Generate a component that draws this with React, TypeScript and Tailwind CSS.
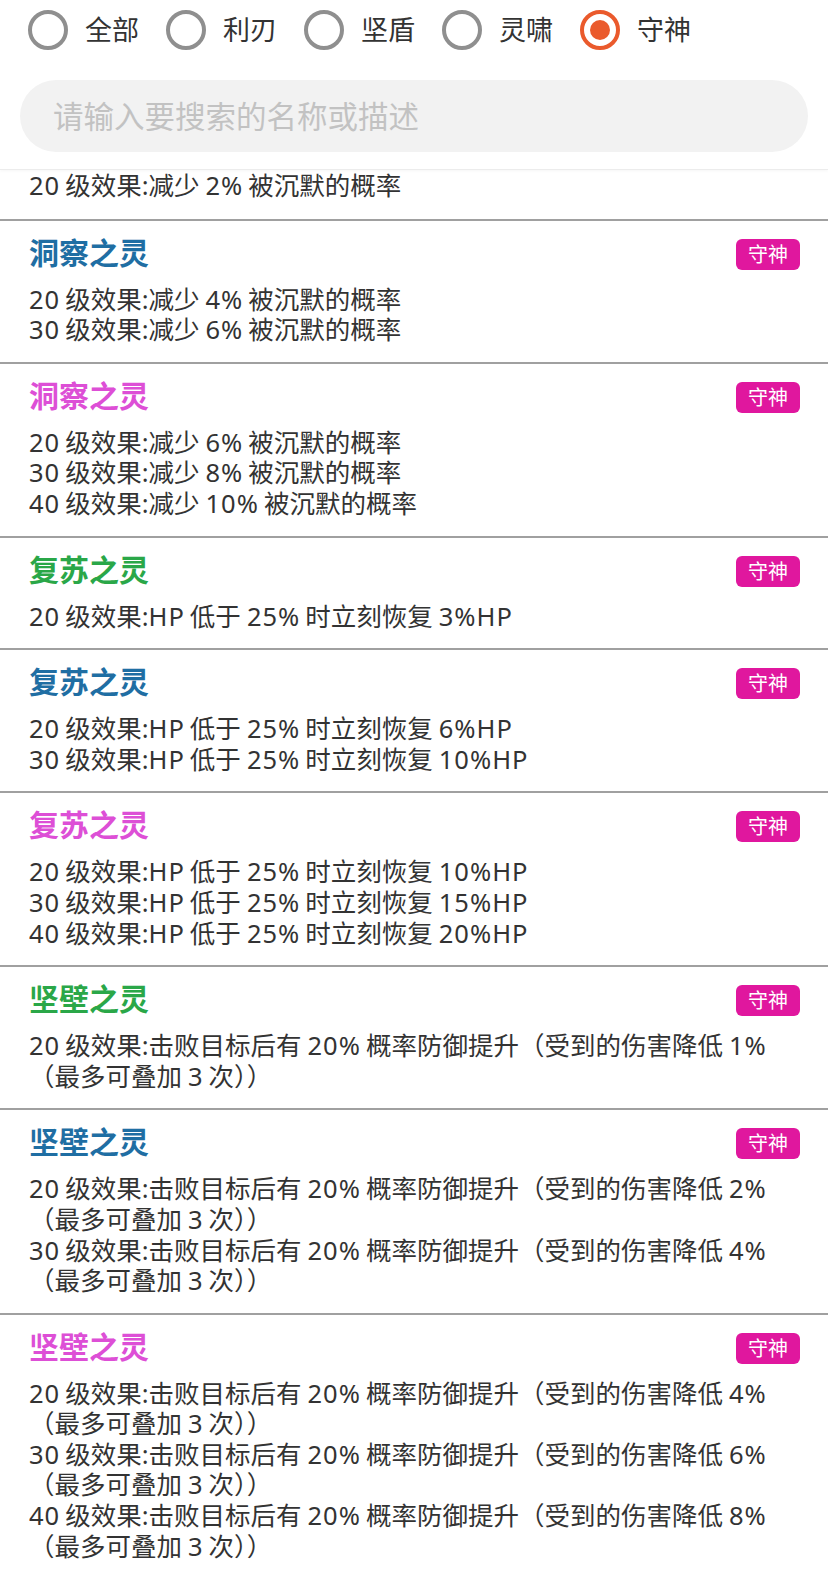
import React, { useState } from 'react';

type Rank = 'blue' | 'pink' | 'green';

interface Spirit {
  id: number;
  name: string;
  rank: Rank;
  effects: string[];
}

const rankColor: Record<Rank, string> = {
  blue: 'text-[#1f6ea3]',
  pink: 'text-[#dd4fd6]',
  green: 'text-[#2aa748]',
};

const tabs = ['全部', '利刃', '坚盾', '灵啸', '守神'];

const spirits: Spirit[] = [
  { id: 1, name: '洞察之灵', rank: 'blue', effects: ['20级效果:减少4%被沉默的概率', '30级效果:减少6%被沉默的概率'] },
  { id: 2, name: '洞察之灵', rank: 'pink', effects: ['20级效果:减少6%被沉默的概率', '30级效果:减少8%被沉默的概率', '40级效果:减少10%被沉默的概率'] },
  { id: 3, name: '复苏之灵', rank: 'green', effects: ['20级效果:HP低于25%时立刻恢复3%HP'] },
  { id: 4, name: '复苏之灵', rank: 'blue', effects: ['20级效果:HP低于25%时立刻恢复6%HP', '30级效果:HP低于25%时立刻恢复10%HP'] },
  { id: 5, name: '复苏之灵', rank: 'pink', effects: ['20级效果:HP低于25%时立刻恢复10%HP', '30级效果:HP低于25%时立刻恢复15%HP', '40级效果:HP低于25%时立刻恢复20%HP'] },
  { id: 6, name: '坚壁之灵', rank: 'green', effects: ['20级效果:击败目标后有20%概率防御提升（受到的伤害降低1%（最多可叠加3次））'] },
  {
    id: 7,
    name: '坚壁之灵',
    rank: 'blue',
    effects: [
      '20级效果:击败目标后有20%概率防御提升（受到的伤害降低2%（最多可叠加3次））',
      '30级效果:击败目标后有20%概率防御提升（受到的伤害降低4%（最多可叠加3次））',
    ],
  },
  {
    id: 8,
    name: '坚壁之灵',
    rank: 'pink',
    effects: [
      '20级效果:击败目标后有20%概率防御提升（受到的伤害降低4%（最多可叠加3次））',
      '30级效果:击败目标后有20%概率防御提升（受到的伤害降低6%（最多可叠加3次））',
      '40级效果:击败目标后有20%概率防御提升（受到的伤害降低8%（最多可叠加3次））',
    ],
  },
];

const isHan = (c?: string) => !!c && /[\u4e00-\u9fff]/.test(c);

// mimic the CJK/latin autospacing of the original device
function Spaced({ text }: { text: string }) {
  const parts = text.split(/([A-Za-z0-9%]+)/);
  return (
    <>
      {parts.map((p, i) => {
        if (i % 2 === 0) return p;
        const before = isHan(parts[i - 1]?.slice(-1));
        const after = isHan(parts[i + 1]?.charAt(0));
        const cls = ['tracking-[1px]', before ? 'ml-[6px]' : '', after ? 'mr-[5px]' : ''].join(' ');
        return (
          <span key={i} className={cls}>
            {p}
          </span>
        );
      })}
    </>
  );
}

function Radio({ checked }: { checked: boolean }) {
  return checked ? (
    <span className="flex h-10 w-10 shrink-0 items-center justify-center rounded-full border-4 border-[#ea5a2c]">
      <span className="h-5 w-5 rounded-full bg-[#ea5a2c]" />
    </span>
  ) : (
    <span className="h-10 w-10 shrink-0 rounded-full border-4 border-[#8f8f8f]" />
  );
}

export default function App() {
  const [tab, setTab] = useState(4);
  const [keyword, setKeyword] = useState('');

  return (
    <div
      className="min-h-screen bg-white text-[#333]"
      style={{ fontFamily: '"Noto Sans", "Noto Sans CJK SC", sans-serif' }}
    >
      {/* Filter header */}
      <div className="relative z-10 border-b border-[#ececec] bg-white pb-[17px] shadow-[0_1px_3px_rgba(0,0,0,0.04)]">
        <div className="flex items-center gap-x-[27px] pl-7 pt-[10px]">
          {tabs.map((t, i) => (
            <button key={t} onClick={() => setTab(i)} className="flex items-center gap-[17px]">
              <Radio checked={tab === i} />
              <span className="text-[27px] leading-10 text-[#333]">{t}</span>
            </button>
          ))}
        </div>
        <div className="mx-5 mt-[30px]">
          <input
            value={keyword}
            onChange={e => setKeyword(e.target.value)}
            placeholder="请输入要搜索的名称或描述"
            className="h-[72px] w-full rounded-full bg-[#f2f2f2] px-[33px] text-[30.5px] text-[#333] outline-none placeholder:text-[#c2c2c2]"
          />
        </div>
      </div>

      {/* List (scrolled, previous item partly hidden) */}
      <div>
        <div className="border-b-2 border-[#a0a0a0] px-[29px] pb-[18px] text-[25.5px] leading-[30.6px]">
          <Spaced text="20级效果:减少2%被沉默的概率" />
        </div>
        {spirits.map(s => (
          <div key={s.id} className="border-b-2 border-[#a0a0a0] pb-[17px] pl-[29px] pr-[28px] pt-[14px]">
            <div className="flex items-start justify-between">
              <span className={`text-[30px] font-bold leading-9 ${rankColor[s.rank]}`}>{s.name}</span>
              <span className="mt-[4px] rounded-md bg-[#e0179e] px-3 text-[20px] leading-[31px] text-white">
                守神
              </span>
            </div>
            <div className="mt-[13px] pr-[16px] text-[25.5px] leading-[30.6px]">
              {s.effects.map((e, i) => (
                <p key={i}>
                  <Spaced text={e} />
                </p>
              ))}
            </div>
          </div>
        ))}
      </div>
    </div>
  );
}
